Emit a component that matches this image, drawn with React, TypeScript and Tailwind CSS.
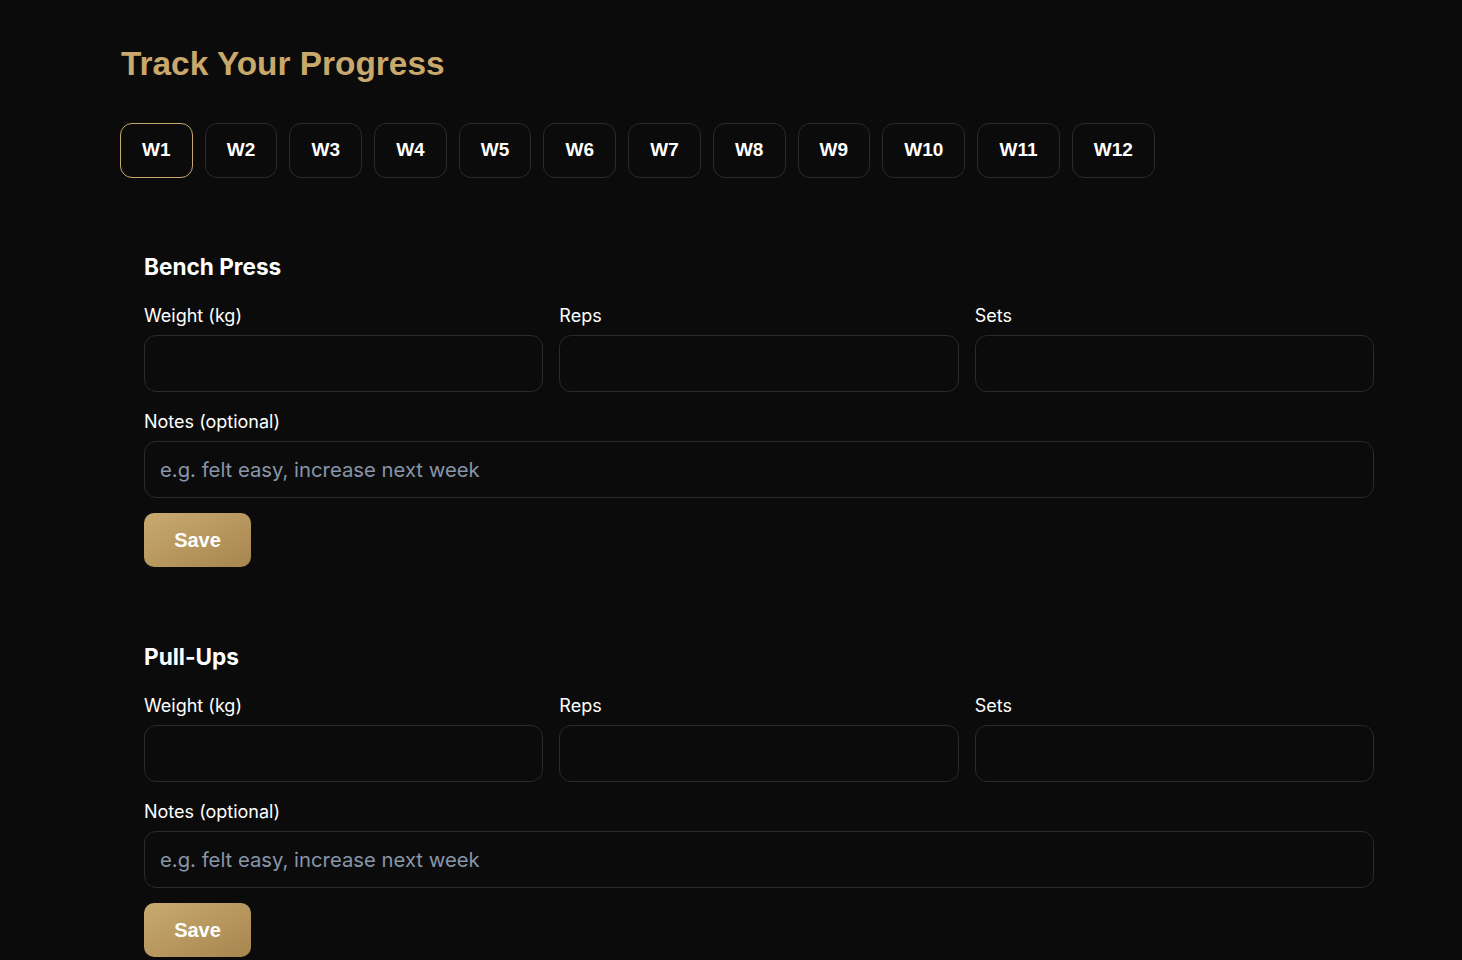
import { useState } from 'react'

const weeks = ['W1', 'W2', 'W3', 'W4', 'W5', 'W6', 'W7', 'W8', 'W9', 'W10', 'W11', 'W12']

const exercises = ['Bench Press', 'Pull-Ups']

function Field({ label }: { label: string }) {
  return (
    <div className="flex flex-col">
      <label className="text-[18px] leading-[27px] text-white mb-[6px]">{label}</label>
      <input
        type="text"
        className="h-[57px] w-full rounded-xl border border-[#2a2a2a] bg-[#0b0b0b] px-4 text-white outline-none"
      />
    </div>
  )
}

function ExerciseCard({ name }: { name: string }) {
  return (
    <div className="p-6 mb-[25px] rounded-2xl">
      <h2 className="text-[22.6px] leading-[33px] font-bold text-white mb-[19px]">{name}</h2>

      <div className="grid grid-cols-3 gap-4">
        <Field label="Weight (kg)" />
        <Field label="Reps" />
        <Field label="Sets" />
      </div>

      <div className="flex flex-col mt-4">
        <label className="text-[18px] leading-[27px] text-white mb-[6px]">Notes (optional)</label>
        <input
          type="text"
          placeholder="e.g. felt easy, increase next week"
          className="h-[57px] w-full rounded-xl border border-[#2a2a2a] bg-[#0b0b0b] px-[15px] text-[20.3px] text-white placeholder:text-[#8896a9] outline-none"
        />
      </div>

      <button
        className="mt-[15px] w-[107px] h-[54px] rounded-[10px] bg-gradient-to-br from-[#c9aa70] to-[#a6864e] text-white text-[20px] font-bold font-['Liberation_Sans',Arial,sans-serif]"
      >
        Save
      </button>
    </div>
  )
}

export default function App() {
  const [active, setActive] = useState('W1')

  return (
    <div className="min-h-screen bg-[#0b0b0b] font-['Inter',sans-serif]">
      <div className="pl-[120px] pr-[64px] pt-[40px]">
        <h1 className="text-[33.4px] leading-[48px] font-bold text-[#c8a86b] font-['Liberation_Sans',Arial,sans-serif] mb-[35px] pl-px">
          Track Your Progress
        </h1>

        {/* Week tabs */}
        <div className="flex gap-3 mb-[48px]">
          {weeks.map((w) => (
            <button
              key={w}
              onClick={() => setActive(w)}
              className={`h-[55px] px-[21.1px] rounded-xl border text-[19px] font-bold text-white font-['Liberation_Sans',Arial,sans-serif]
                ${active === w ? 'border-[#c8a86b]' : 'border-[#2a2a2a]'}`}
            >
              {w}
            </button>
          ))}
        </div>

        {exercises.map((ex) => (
          <ExerciseCard key={ex} name={ex} />
        ))}
      </div>
    </div>
  )
}
